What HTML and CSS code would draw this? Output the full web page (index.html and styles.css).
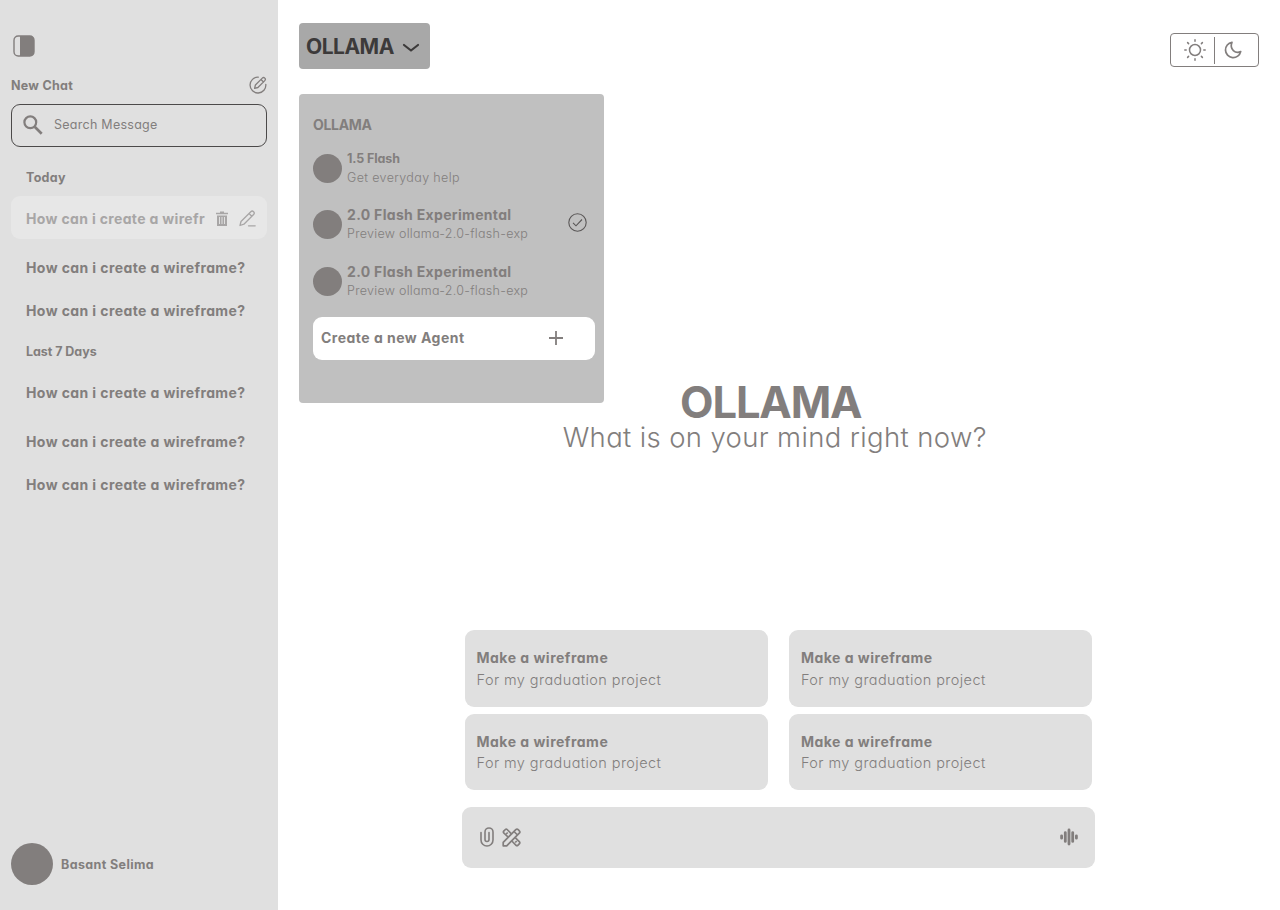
FILE: index.html
```
<!DOCTYPE html>
<html lang="en">
<head>
<meta charset="utf-8">
<title>Ollama</title>
<link rel="stylesheet" href="styles.css">
</head>
<body>
<div class="app">
  <aside class="sidebar">
    <svg class="panel-icon" viewBox="0 0 22 22"><rect x="1" y="1" width="20" height="20" rx="4.2" fill="none" stroke="currentColor" stroke-width="1.4"/><path d="M7 1h10a4 4 0 0 1 4 4v12a4 4 0 0 1-4 4H7z" fill="currentColor"/></svg>
    <div class="new-chat">
      <span class="t-new">New Chat</span>
      <svg class="compose-icon" viewBox="0 0 18 18" fill="none" stroke="currentColor" stroke-width="1.3" stroke-linecap="round" stroke-linejoin="round"><path d="M9.3 1.2A7.9 7.9 0 1 0 16.8 8.300"/><path d="M5.600 12.300l.8-3.300 6.900-6.900a1.700 1.700 0 0 1 2.500 2.500L8.900 11.500z M12 3.500l2.500 2.500"/></svg>
    </div>
    <div class="search">
      <svg class="search-icon" viewBox="0 0 20 20" fill="none" stroke="currentColor"><circle cx="7.300" cy="7.300" r="5.900" stroke-width="2.200"/><path d="M11.700 11.700l7 7" stroke-width="2.700"/></svg>
      <span class="t-search">Search Message</span>
    </div>
    <h2 class="group"><span class="t-today">Today</span></h2>
    <div class="chat selected">
      <span class="t-cut">How can i create a wirefr</span>
      <svg class="trash-icon" viewBox="0 0 12 15"><path d="M4 .5h4v1.300h4v1.500H0V1.800h4z" fill="currentColor"/><path d="M1 4.500h10V15H1z" fill="currentColor"/><path d="M3.500 6v7M6 6v7M8.500 6v7" stroke="#e7e7e7" stroke-width=".9"/></svg>
      <svg class="edit-icon" viewBox="0 0 17 17" fill="none" stroke="currentColor" stroke-width="1.300" stroke-linecap="round" stroke-linejoin="round"><path d="M1 15.500l1-4L11.800 1.700a1.900 1.900 0 0 1 2.800 2.800L4.900 14.200z M10 3.500l2.800 2.800 M9.500 15.800h6.700"/></svg>
    </div>
    <div class="chat"><span class="t-chat">How can i create a wireframe?</span></div>
    <div class="chat tight"><span class="t-chat">How can i create a wireframe?</span></div>
    <h2 class="group week"><span class="t-week">Last 7 Days</span></h2>
    <div class="chat first"><span class="t-chat">How can i create a wireframe?</span></div>
    <div class="chat late"><span class="t-chat">How can i create a wireframe?</span></div>
    <div class="chat tight"><span class="t-chat">How can i create a wireframe?</span></div>
    <div class="user"><i class="avatar"></i><span class="t-user">Basant Selima</span></div>
  </aside>
  <main class="main">
    <header class="topbar">
      <div class="model-button">
        <span class="t-model">OLLAMA</span>
        <svg class="chevron" viewBox="0 0 18 10" fill="none" stroke="currentColor" stroke-width="2.200" stroke-linecap="round" stroke-linejoin="round"><path d="M2 2l7 5.500L16 2"/></svg>
        <div class="menu">
          <h3 class="menu-title"><span class="t-menu">OLLAMA</span></h3>
          <div class="model one"><i class="dot"></i><div><b class="t-flash">1.5 Flash</b><p class="t-help">Get everyday help</p></div></div>
          <div class="model two"><i class="dot"></i><div><b class="t-exp">2.0 Flash Experimental</b><p class="t-prev">Preview ollama-2.0-flash-exp</p></div>
            <svg class="check" viewBox="0 0 19 19" fill="none" stroke="currentColor"><circle cx="9.500" cy="9.500" r="8.700" stroke-width="1.100"/><path d="M5 9.800l3 3 6-6.300" stroke-width="1.100"/></svg></div>
          <div class="model three"><i class="dot"></i><div><b class="t-exp">2.0 Flash Experimental</b><p class="t-prev">Preview ollama-2.0-flash-exp</p></div></div>
          <div class="create"><span class="t-create">Create a new Agent</span><svg class="plus" viewBox="0 0 14 14" stroke="currentColor" stroke-width="1.800"><path d="M7 0v14M0 7h14"/></svg></div>
        </div>
      </div>
      <div class="theme">
        <svg class="sun" viewBox="0 0 22 22" fill="none" stroke="currentColor" stroke-width="1.500" stroke-linecap="round"><circle cx="11" cy="11" r="5.500"/><path d="M11 .8v1.400M11 19.800v1.400M.8 11h1.400M19.800 11h1.400M3.600 3.600l1 1M17.400 17.400l1 1M18.400 3.600l-1 1M4.600 17.400l-1 1"/></svg>
        <i class="divider"></i>
        <svg class="moon" viewBox="0 0 18 18" fill="none" stroke="currentColor" stroke-width="1.700" stroke-linejoin="round"><path d="M8 1.300A7.700 7.700 0 1 0 16.700 10.600 C11.500 13 5.200 8.500 8 1.300z"/></svg>
      </div>
    </header>
    <section class="hero"><h1><span class="t-hero">OLLAMA</span></h1><p><span class="t-sub">What is on your mind right now?</span></p></section>
    <section class="cards">
      <div class="card"><b class="t-make">Make a wireframe</b><p class="t-for">For my graduation project</p></div>
      <div class="card"><b class="t-make">Make a wireframe</b><p class="t-for">For my graduation project</p></div>
      <div class="card"><b class="t-make">Make a wireframe</b><p class="t-for">For my graduation project</p></div>
      <div class="card"><b class="t-make">Make a wireframe</b><p class="t-for">For my graduation project</p></div>
    </section>
    <div class="composer">
      <svg class="clip" viewBox="0 0 14 20" fill="none" stroke="currentColor" stroke-width="1.600" stroke-linecap="round"><path d="M1 5.500v7.500a6 6 0 0 0 12 0V5a4 4 0 0 0-8 0v7.500a2 2 0 0 0 4 0V5.500"/></svg>
      <svg class="tools" viewBox="0 0 19 19" fill="none" stroke="currentColor" stroke-width="1.700" stroke-linejoin="round"><path d="M1.200 17.800v-3.500L13.800 1.700a1.700 1.700 0 0 1 2.400 0l1.100 1.100a1.700 1.700 0 0 1 0 2.400L4.700 17.800z M12.500 4l2.500 2.500"/><path d="M6 9L1.700 4.900a1.200 1.200 0 0 1 0-1.700L3.400 1.500a1.200 1.200 0 0 1 1.700 0L9.400 5.800M13.200 9.600l4.300 4.300a1.200 1.200 0 0 1 0 1.700l-1.700 1.700a1.200 1.200 0 0 1-1.700 0L9.800 13M4.200 6l1.500-1.500M13.200 14.500l1.500-1.500"/></svg>
      <svg class="wave" viewBox="0 0 18 18" fill="none" stroke="currentColor" stroke-width="2.800" stroke-linecap="round"><path d="M1.600 7.800v2.400M5.300 4.600v8.800M9 2v14M12.700 4.600v8.800M16.400 7.800v2.400"/></svg>
    </div>
  </main>
</div>
</body>
</html>
```
FILE: styles.css
```
* { box-sizing: border-box; }
body { margin: 0; background: #fff; color: #827e7d; font-family: Inter, "Open Sans", sans-serif; font-feature-settings: "cv11"; font-size: 14px; font-weight: 700; }
h1, h2, h3, p { margin: 0; font: inherit; }
b { font-weight: 700; display: block; white-space: nowrap; }
span, p { white-space: nowrap; }
svg { display: block; flex: none; }
.app { display: flex; width: 1280px; height: 910px; overflow: hidden; }
.sidebar { width: 277.500px; flex: none; background: #e0e0e0; padding: 35px 11px 25px; display: flex; flex-direction: column; }
.panel-icon { width: 22px; height: 22px; margin-left: 2px; }
.new-chat { height: 20px; margin-top: 18px; display: flex; align-items: center; justify-content: space-between; font-size: 12.500px; }
.compose-icon { width: 18px; height: 18px; }
.search { height: 43px; margin-top: 9px; border: 1px solid #4c4a4a; border-radius: 9px; display: flex; align-items: center; padding: 0 0 1px 11px; gap: 11px; font-size: 12.500px; font-weight: 400; }
.search span { margin-top: -1px; }
.search-icon { width: 20px; height: 20px; }
.group { height: 20px; line-height: 20px; margin: 21px 0 8px 15px; font-size: 12.500px; }
.group.week { margin: 10px 0 0 15px; }
.chat { height: 43px; flex: none; margin-top: 7px; padding-left: 15px; display: flex; align-items: center; border-radius: 9px; }
.selected { margin-top: 0; padding-top: 2px; background: #e7e7e7; color: #a8a6a6; }
.tight { margin-top: -.5px; }
.first { margin-top: 9.500px; }
.late { margin-top: 6px; }
.trash-icon { width: 12px; height: 15px; margin-left: 11px; }
.edit-icon { width: 17px; height: 17px; margin-left: 11px; }
.user { margin-top: auto; display: flex; align-items: center; gap: 8px; font-size: 12.500px; }
.avatar { width: 42px; height: 42px; border-radius: 50%; background: #827e7d; }
.main { flex: 1; min-width: 0; display: flex; flex-direction: column; }
.topbar { height: 70px; display: flex; justify-content: space-between; padding: 23px 21px 0 21.500px; }
.model-button { position: relative; width: 131.400px; height: 46px; background: #a8a8a8; color: #3c3a3a; border-radius: 4px; display: flex; align-items: center; padding-left: 7px; gap: 8px; font-size: 21px; }
.chevron { width: 18px; height: 10px; margin-top: 3px; }
.menu { position: absolute; left: 0; top: 71.400px; width: 305.400px; height: 309px; border-radius: 4px; background: #c0c0c0; color: #827e7d; font-size: 14px; padding: 21px 9px 0 14px; }
.menu-title { height: 20px; line-height: 20px; }
.model { display: flex; align-items: center; gap: 5px; height: 38px; }
.model b { line-height: 19px; }
.model p { line-height: 19px; font-weight: 300; font-size: 12.500px; }
.one { margin-top: 14px; }
.two { margin-top: 18px; }
.three { margin-top: 19px; }
.dot { width: 29px; height: 29px; border-radius: 50%; background: #827e7d; }
.check { width: 19px; height: 19px; margin: -4px 8px 0 auto; color: #5a5757; }
.create { height: 43px; margin-top: 17px; background: #fff; border-radius: 9px; display: flex; align-items: center; justify-content: space-between; padding: 0 32px 2px 8px; }
.plus { width: 14px; height: 14px; }
.theme { width: 89px; height: 34px; margin-top: 10px; border: 1px solid #827e7d; border-radius: 4px; display: flex; align-items: center; }
.sun { width: 22px; height: 22px; margin-left: 13px; }
.divider { width: 1px; height: 27px; background: #827e7d; margin-left: 8px; }
.moon { width: 18px; height: 18px; margin-left: 9px; }
.hero { margin-top: 310px; display: flex; flex-direction: column; align-items: center; }
.hero h1 { font-size: 43.500px; font-weight: 750; height: 44px; line-height: 44px; margin-right: 16px; }
.hero p { font-size: 27.500px; height: 28px; line-height: 26px; font-weight: 300; margin-right: 8px; }
.cards { display: grid; grid-template-columns: 303px 303px; grid-auto-rows: 76.500px; column-gap: 21.400px; row-gap: 7px; margin: 178px 0 0 187.500px; }
.card { background: #e0e0e0; border-radius: 9px; padding: 17px 11.500px; }
.card b, .card p { line-height: 21.500px; }
.card p { font-size: 14.500px; font-weight: 300; }
.composer { width: 633px; height: 61px; margin: 17px 0 0 184.500px; border-radius: 9px; background: #e0e0e0; display: flex; align-items: center; padding: 0 17px 1px 18px; }
.clip { width: 14px; height: 20px; }
.tools { width: 19px; height: 19px; margin-left: 8px; }
.wave { width: 18px; height: 18px; margin-left: auto; }

/* Tracking per text style */
.t-new, .t-today { letter-spacing: .28px; }
.t-search { letter-spacing: .26px; }
.t-cut { letter-spacing: .34px; }
.t-chat { letter-spacing: .4px; }
.t-week { letter-spacing: -.05px; }
.t-user { letter-spacing: .38px; }
.t-model { letter-spacing: -.5px; }
.t-menu { letter-spacing: -.3px; }
.t-flash { font-size: 12.500px; letter-spacing: -.1px; }
.t-help { letter-spacing: .36px; }
.t-exp { letter-spacing: .32px; }
.t-prev { letter-spacing: .28px; }
.t-create { letter-spacing: .48px; }
.t-hero { letter-spacing: -1.150px; }
.t-sub { letter-spacing: .36px; }
.t-make { letter-spacing: .5px; }
.t-for { letter-spacing: .42px; }
```
